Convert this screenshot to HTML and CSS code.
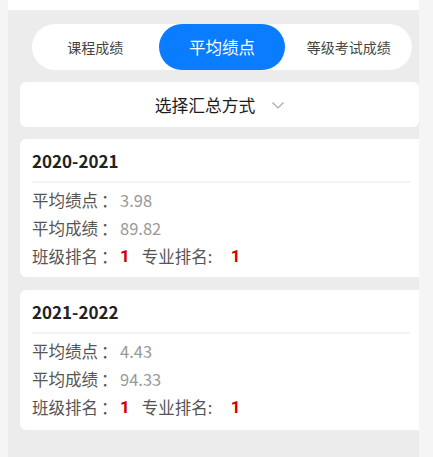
FILE: index.html
```html
<!DOCTYPE html>
<html lang="zh-CN">
<head>
<meta charset="utf-8">
<title>平均绩点</title>
<link rel="stylesheet" href="styles.css">
</head>
<body>
<div class="frame">
  <div class="topbar"></div>
  <div class="panel">
    <div class="tabs">
      <div class="tab">课程成绩</div>
      <div class="tab active">平均绩点</div>
      <div class="tab">等级考试成绩</div>
    </div>
    <div class="picker">
      <span class="picker-text">选择汇总方式</span>
      <svg class="chev" width="12" height="7" viewBox="0 0 12 7"><polyline points="0.5,0.5 6,6 11.5,0.5" fill="none" stroke="#a8a8a8" stroke-width="1.1"/></svg>
    </div>
    <div class="card">
      <div class="title">2020-2021</div>
      <div class="divider"></div>
      <div class="row"><span class="label">平均绩点<span class="colon">：</span></span><span class="val">3.98</span></div>
      <div class="row"><span class="label">平均成绩<span class="colon">：</span></span><span class="val">89.82</span></div>
      <div class="row"><span class="label">班级排名<span class="colon">：</span></span><span class="rank">1</span><span class="label2">专业排名:</span><span class="rank">1</span></div>
    </div>
    <div class="card card2">
      <div class="title">2021-2022</div>
      <div class="divider"></div>
      <div class="row"><span class="label">平均绩点<span class="colon">：</span></span><span class="val">4.43</span></div>
      <div class="row"><span class="label">平均成绩<span class="colon">：</span></span><span class="val">94.33</span></div>
      <div class="row"><span class="label">班级排名<span class="colon">：</span></span><span class="rank">1</span><span class="label2">专业排名:</span><span class="rank">1</span></div>
    </div>
  </div>
</div>
</body>
</html>
```
FILE: styles.css
```css
html, body {
  margin: 0;
  padding: 0;
  height: 457px;
  overflow: hidden;
  background: #f5f5f5;
  font-family: "Noto Sans CJK SC", "Noto Sans", sans-serif;
}
.frame {
  margin-left: 8px;
  width: 411px;
  height: 457px;
  overflow: hidden;
  background: #ececec;
  display: flex;
  flex-direction: column;
}
.topbar {
  height: 10px;
  background: #ffffff;
  flex: none;
}
.panel {
  padding: 14px 0 0 12px;
  width: 415px;
}
.tabs {
  margin-left: 12px;
  width: 380px;
  height: 46px;
  background: #ffffff;
  border-radius: 23px;
  display: grid;
  grid-template-columns: 1fr 1fr 1fr;
}
.tab {
  display: flex;
  align-items: center;
  justify-content: center;
  font-size: 14px;
  color: #454545;
  border-radius: 23px;
}
.tab.active {
  background: #0a7cff;
  color: #ffffff;
  font-size: 16.5px;
}
.picker {
  margin-top: 12px;
  height: 45px;
  background: #ffffff;
  border-radius: 6px;
  display: flex;
  align-items: center;
  justify-content: center;
  gap: 17px;
  width: 399px;
}
.picker-text {
  font-size: 16.8px;
  color: #1c1c1c;
}
.chev {
  display: block;
  margin-top: 1px;
}
.card {
  margin-top: 12px;
  background: #ffffff;
  border-radius: 6px;
  padding: 10px 13px 7px 12px;
  width: 378px;
}
.card2 {
  margin-top: 13px;
  padding-bottom: 9px;
}
.title {
  font-size: 17px;
  font-weight: 700;
  line-height: 24px;
  color: #222222;
}
.divider {
  margin-top: 8px;
  height: 2px;
  background: #f3f3f3;
  margin-bottom: 3px;
}
.row {
  display: flex;
  align-items: center;
  height: 28px;
  font-size: 16.5px;
  color: #555555;
}
.label {
  width: 88px;
}
.colon {
  margin-left: 3px;
}
.val {
  color: #999999;
}
.rank {
  color: #d10000;
  font-weight: 700;
  font-family: "Roboto", "Noto Sans", sans-serif;
  font-size: 17px;
}
.label2 {
  margin-left: 12px;
  width: 89px;
}
```
